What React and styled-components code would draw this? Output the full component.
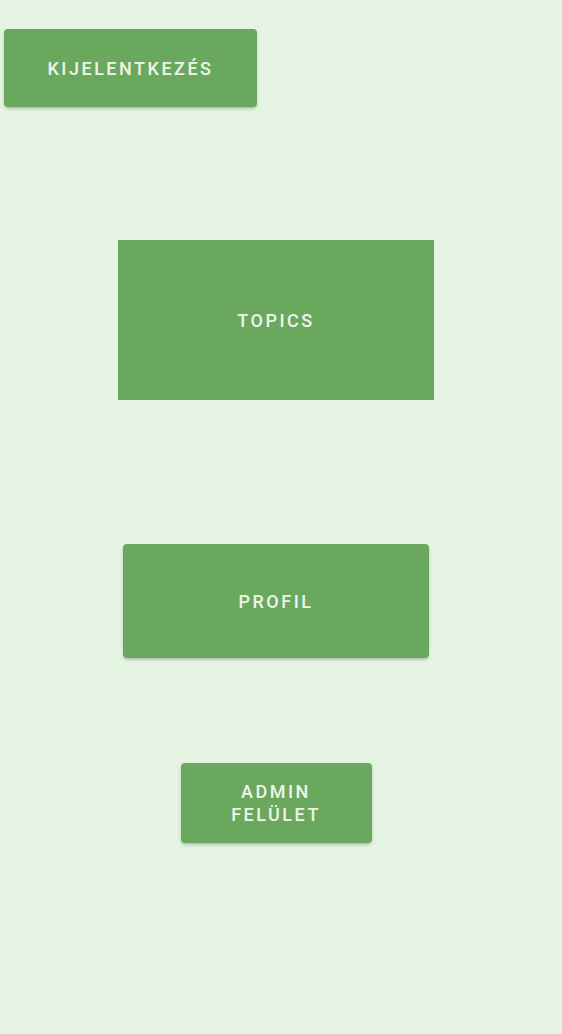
import React from "react";
import styled, { createGlobalStyle } from "styled-components";

const GlobalStyle = createGlobalStyle`
  html, body {
    margin: 0;
    padding: 0;
    background-color: #e6f5e3;
  }
  body {
    font-family: Roboto, "Liberation Sans", sans-serif;
  }
`;

const Page = styled.div`
  min-height: 1034px;
  width: 552px;
  display: flex;
  flex-direction: column;
  background-color: #e6f5e3;
`;

const TopBar = styled.div`
  display: flex;
  padding: 29px 0 0 4px;
`;

const Main = styled.div`
  display: flex;
  flex-direction: column;
  align-items: center;
`;

const Button = styled.button`
  display: flex;
  align-items: center;
  justify-content: center;
  width: ${p => p.w}px;
  height: ${p => p.h}px;
  margin-top: ${p => p.top || 0}px;
  padding: 0 8px;
  border: none;
  border-radius: ${p => (p.flat ? 0 : 4)}px;
  background-color: #6aa95d;
  box-shadow: ${p =>
    p.flat
      ? "none"
      : "0 2px 3px -1px rgba(0, 0, 0, 0.2), 0 2px 4px 0 rgba(0, 0, 0, 0.1)"};
  color: #eef4ec;
  font-family: Roboto, "Liberation Sans", sans-serif;
  font-weight: 500;
  font-size: 18px;
  line-height: 23px;
  letter-spacing: 2.5px;
  text-transform: uppercase;
  text-align: center;
  cursor: pointer;
`;

export default function App() {
  return (
    <>
      <GlobalStyle />
      <Page>
        <TopBar>
          <Button w={253} h={78}>
            Kijelentkezés
          </Button>
        </TopBar>
        <Main>
          <Button flat w={316} h={160} top={133}>
            Topics
          </Button>
          <Button w={306} h={114} top={144}>
            Profil
          </Button>
          <Button w={191} h={80} top={105}>
            Admin
            <br />
            Felület
          </Button>
        </Main>
      </Page>
    </>
  );
}
